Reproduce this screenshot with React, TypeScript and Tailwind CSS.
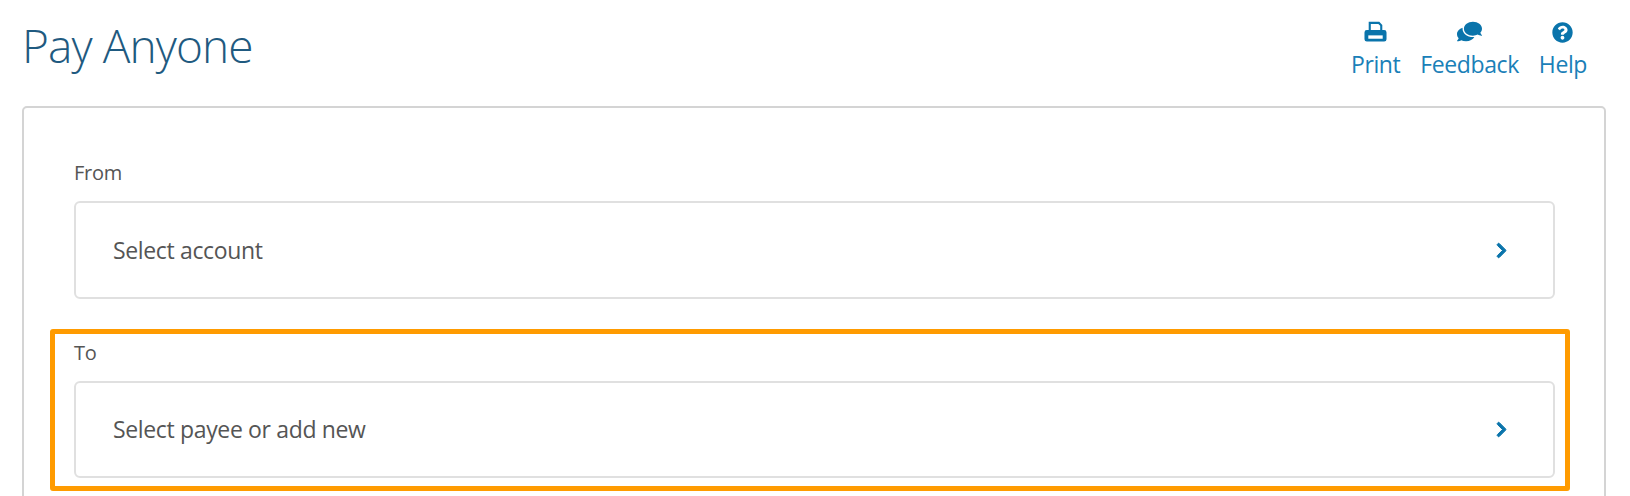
import React from "react";
import { FaComments, FaQuestionCircle, FaChevronRight } from "react-icons/fa";

const PrinterIcon = () => (
  <svg viewBox="0 0 24 24" className="h-[23px] w-[23px]" fill="currentColor">
    <path d="M6 10V2h9.5L18 4.5V10" fill="none" stroke="currentColor" strokeWidth="2.2" />
    <path d="M3 9.5h18a2.5 2.5 0 0 1 2.5 2.5v7a2.5 2.5 0 0 1-2.5 2.5H3A2.5 2.5 0 0 1 .5 19v-7A2.5 2.5 0 0 1 3 9.5z" />
    <rect x="4.5" y="15" width="15" height="3.5" fill="#ffffff" />
  </svg>
);

const actions = [
  { label: "Print", icon: <PrinterIcon /> },
  { label: "Feedback", icon: <FaComments className="text-[25px] -scale-x-100 -translate-y-[1px]" /> },
  { label: "Help", icon: <FaQuestionCircle className="text-[21px]" /> },
];

const SelectRow = ({ text, tall }: { text: string; tall?: boolean }) => (
  <div
    className={`flex ${tall ? "h-[98px]" : "h-[97px]"} items-center justify-between rounded-[6px] border-2 border-[#e0e0e0] bg-white pl-[37px] pr-[43px]`}
  >
    <span className="text-[23px] tracking-[-0.35px] text-[#555555]">{text}</span>
    <FaChevronRight className="text-[17px] text-[#0a74ab] stroke-[30px]" />
  </div>
);

const App = () => {
  return (
    <div className="h-[496px] w-[1630px] overflow-hidden bg-white font-['Open_Sans',sans-serif]">
      {/* Header */}
      <div className="flex h-[106px] items-start justify-between pl-[22px] pr-[43px]">
        <h1 className="mt-[13px] text-[46px] font-light leading-[64px] tracking-[-0.9px] text-[#1f5a80]">
          Pay Anyone
        </h1>
        <div className="mt-[19px] flex gap-[20px]">
          {actions.map((a) => (
            <a key={a.label} className="flex flex-col items-center text-[#1a80b8]">
              <span className="flex h-[26px] items-center text-[#0a74ab]">{a.icon}</span>
              <span className="mt-[3px] text-[23px] leading-[32px] tracking-[-0.4px]">{a.label}</span>
            </a>
          ))}
        </div>
      </div>

      {/* Form card */}
      <div className="ml-[22px] mr-[24px] h-[500px] rounded-[5px] border-2 border-[#d4d4d4] pl-[50px] pr-[49px] pt-[51px]">
        <label className="block text-[20px] leading-[28px] tracking-[-0.3px] text-[#555555]">From</label>
        <div className="mt-[14px]">
          <SelectRow text="Select account" tall />
        </div>

        <div className="-ml-[24px] -mr-[15px] mt-[30px] rounded-[3px] border-[5px] border-[#ff9b00] pl-[19px] pr-[10px] pb-[8px] pt-[5px]">
          <label className="block text-[20px] leading-[28px] tracking-[-0.3px] text-[#555555]">To</label>
          <div className="mt-[14px]">
            <SelectRow text="Select payee or add new" />
          </div>
        </div>
      </div>
    </div>
  );
};

export default App;
